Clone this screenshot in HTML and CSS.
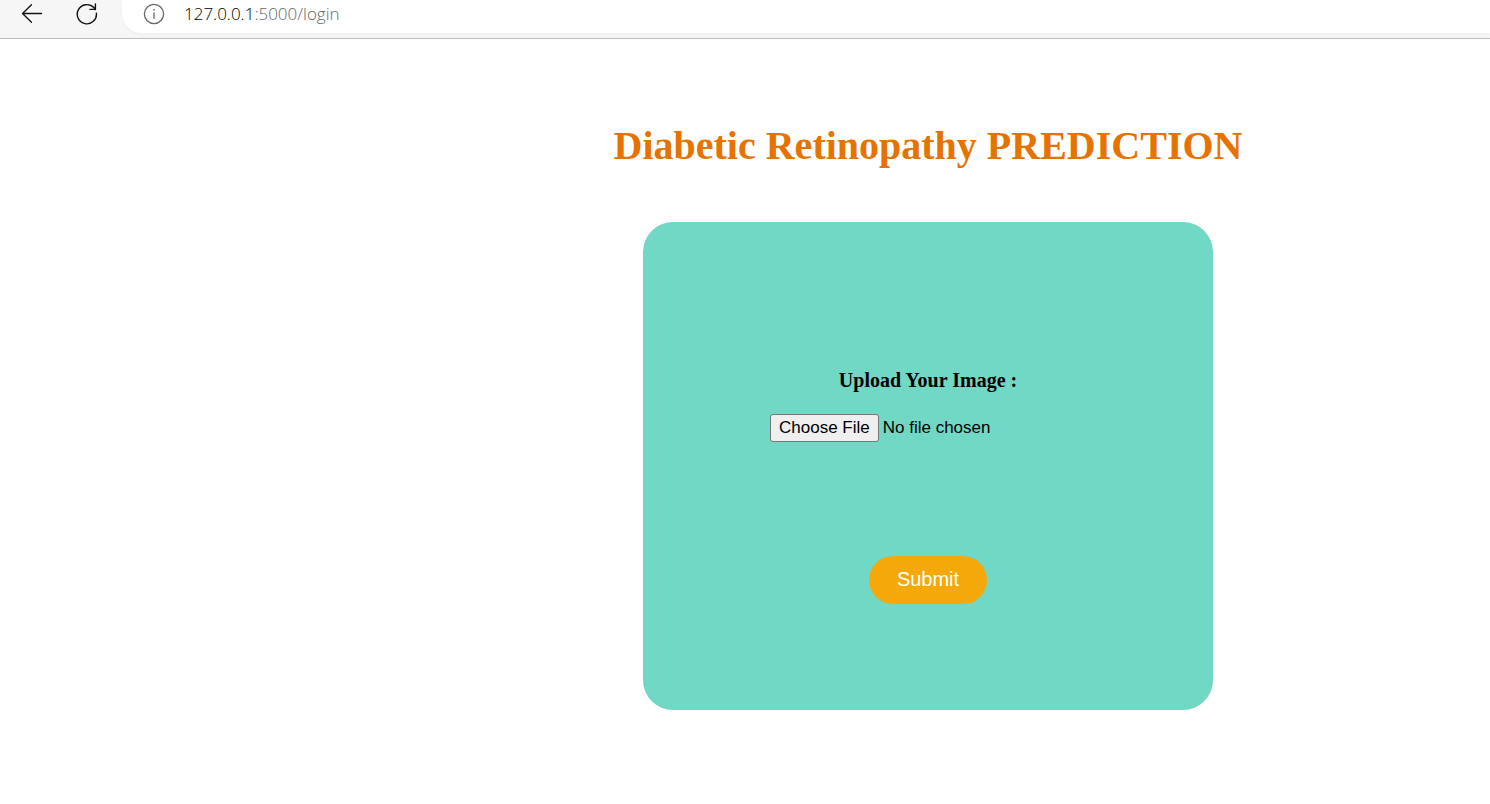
FILE: index.html
```html
<!DOCTYPE html>
<html lang="en">
<head>
  <meta charset="utf-8">
  <title>Diabetic Retinopathy Prediction</title>
  <link rel="stylesheet" href="styles.css">
</head>
<body>
  <header class="toolbar">
    <button class="nav-button" type="button" aria-label="Back">
      <svg width="22" height="22" viewBox="0 0 22 22" fill="none" stroke="#111" stroke-width="1.3" stroke-linecap="round" stroke-linejoin="round"><path d="M20.5 10.5H1.5M10.5 1.8L1.5 10.5l9 8.7"/></svg>
    </button>
    <button class="nav-button" type="button" aria-label="Refresh">
      <svg width="22" height="22" viewBox="0 0 22 22" fill="none" stroke="#111" stroke-width="1.4" stroke-linecap="round" stroke-linejoin="round"><path d="M20.4 10.2A9.6 9.6 0 1 1 17.8 4.6L19.4 6.4M19.4 1v5.4H14"/></svg>
    </button>
    <div class="address">
      <svg width="22" height="22" viewBox="0 0 22 22" fill="none" stroke="#666" stroke-width="1.3"><circle cx="11" cy="11" r="9.6"/><path d="M11 9.4v6.4"/><circle cx="11" cy="6.8" r="0.9" fill="#666" stroke="none"/></svg>
      <span class="url"><span class="host">127.0.0.1</span>:5000/login</span>
    </div>
  </header>
  <main class="page">
    <h1 class="title">Diabetic Retinopathy PREDICTION</h1>
    <form class="card">
      <label class="upload-label" for="image">Upload Your Image :</label>
      <input class="upload" id="image" name="image" type="file">
      <button class="submit" type="submit">Submit</button>
    </form>
  </main>
</body>
</html>
```
FILE: styles.css
```css
* {
  box-sizing: border-box;
}

body {
  margin: 0;
  background: #fff;
  font-family: "Liberation Serif", "Times New Roman", serif;
}

.toolbar {
  display: flex;
  height: 39px;
  padding: 0 0 5px 21px;
  background: #f6f6f6;
  border-bottom: 1px solid #bcbcbc;
}

.nav-button {
  width: 22px;
  height: 22px;
  margin: 3px 33px 0 0;
  padding: 0;
  border: 0;
  background: none;
}

.nav-button svg {
  display: block;
}

.address {
  display: flex;
  flex: 1;
  align-items: flex-start;
  gap: 19px;
  margin-left: -9px;
  padding: 3px 0 0 21px;
  background: #fff;
  border-bottom-left-radius: 20px;
  box-shadow: 0 1px 3px #eee;
}

.url {
  color: #666;
  font: 300 17px/22px "Open Sans", "Noto Sans", sans-serif;
}

.host {
  color: #000;
}

.page {
  display: flex;
  flex-direction: column;
  align-items: center;
  min-width: 1124px;
  margin-left: 366px;
  padding: 83px 0 94px;
}

.title {
  margin: 0 0 52px;
  color: #e67300;
  font-size: 40px;
  line-height: 48px;
  white-space: nowrap;
}

.card {
  display: flex;
  flex-direction: column;
  align-items: center;
  width: 570px;
  padding: 146px 64px 106px;
  background: #72d8c6;
  border-radius: 30px;
}

.upload-label {
  font-size: 20px;
  font-weight: bold;
  line-height: 24px;
}

.upload {
  width: 316px;
  margin: 22px 0 114px;
  font: 17px/22px "Liberation Sans", Arial, sans-serif;
}

.upload::file-selector-button {
  height: 28px;
  margin-right: 4px;
  padding: 0 8px;
  border: 1px solid #767676;
  border-radius: 3px;
  background: #efefef;
  color: #000;
  font: inherit;
}

.submit {
  height: 48px;
  padding: 0 28px 2px;
  border: 0;
  border-radius: 24px;
  background: #f5a80a;
  color: #fff;
  font: 20px/24px "Liberation Sans", Arial, sans-serif;
}
```
